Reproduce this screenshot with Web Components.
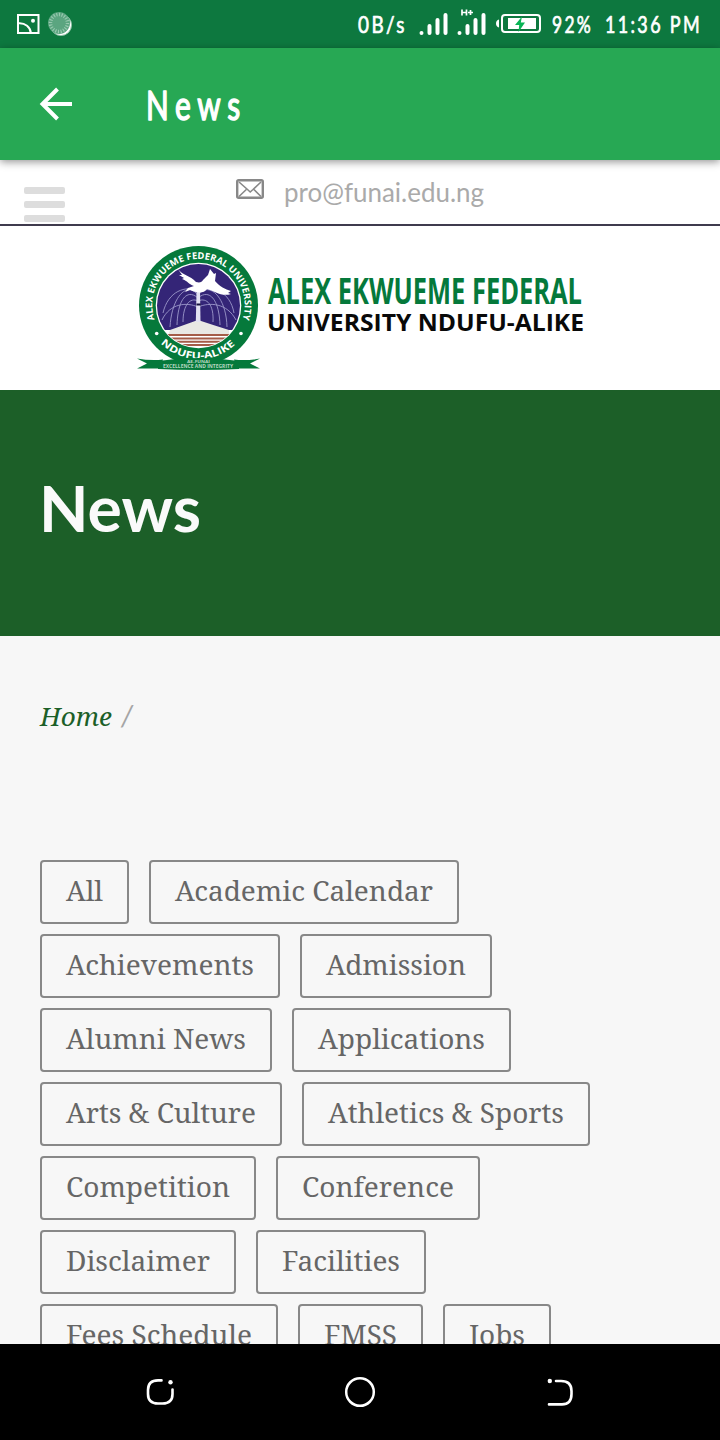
<!DOCTYPE html>
<html lang="en">
<head>
<meta charset="utf-8">
<title>News</title>
<style>
html,body{margin:0;padding:0;background:#f7f7f7}
body{width:720px;height:1440px;overflow:hidden}
</style>
</head>
<body>
<news-screen></news-screen>
<script>
const define = (name, html) => customElements.define(name, class extends HTMLElement {
  constructor(){ super(); this.attachShadow({mode:'open'}).innerHTML = html; }
});

/* One line of text set to an exact measure: w, h, base (baseline), size, face */
customElements.define('fit-text', class extends HTMLElement {
  connectedCallback(){
    const a = (n, d) => this.getAttribute(n) ?? d;
    const faces = {
      serif: '"Noto Serif","DejaVu Serif",serif',
      lato: 'Lato,sans-serif',
      sans: '"Open Sans","Noto Sans",sans-serif'
    };
    const root = this.attachShadow({mode:'open'});
    root.innerHTML = `<style>:host{display:block;flex:none}svg{display:block;overflow:visible}
      text{font-family:${faces[a('face','lato')]};font-size:${a('size',28)}px;font-weight:${a('weight',400)};font-style:${a('slant','normal')};letter-spacing:${a('track',0)}px;fill:currentColor;stroke:currentColor;stroke-width:${a('stroke',0)};stroke-linejoin:round}</style>
      <svg width="${a('w')}" height="${a('h')}"><text x="0" y="${a('base')}" textLength="${a('w')}" lengthAdjust="spacingAndGlyphs"></text></svg>`;
    root.querySelector('text').textContent = a('text','');
  }
});

define('status-bar', `<style>
:host{display:flex;height:48px;background:#0d783f;color:#fff;padding:0 18px 0 16px;box-sizing:border-box}
svg{display:block;flex:none}.sp{flex:1}
.n{display:flex}
</style>
<svg width="58" height="48" fill="none" stroke="#fff">
 <rect x="2" y="15" width="20.5" height="18" stroke-width="2"/>
 <path d="M3 23.3C9 23 14.5 27 14.8 33" stroke-width="2"/><circle cx="17" cy="20.8" r="2" fill="#fff" stroke="none"/>
 <circle cx="45" cy="25" r="10.6" fill="#fff" stroke="#8fc1a6" stroke-width="1"/>
 <circle cx="43" cy="23" r="11" fill="#5ba580" stroke="none"/>
 <circle cx="43" cy="23" r="8.5" stroke="#9bcab1" stroke-width="3.5" stroke-dasharray="1.1 1.55"/>
</svg>
<span class="sp"></span>
<fit-text text="0B/s" w="49" h="48" base="33" size="23" track="3" stroke=".7"></fit-text>
<svg width="144" height="48" style="margin-left:1px">
 <g stroke="#fff" stroke-width="4" stroke-linecap="round">
 <path d="M13.5 33V33M21.5 26V33M29.5 20V33M37.5 15V33M51.5 33V33M59.5 26V33M67.5 20V33M75.5 15V33"/></g>
 <path d="M54 9.5V15.5M58.5 9.5V15.5M54 12.5H58.5M60 12.5H65M62.5 10V15" stroke="#fff" stroke-width="1.7" fill="none"/>
 <rect x="94" y="15" width="38" height="17" rx="3" fill="none" stroke="#fff" stroke-width="2"/>
 <path d="M91 19.5V27.5C87 27 87 20 91 19.5Z" fill="#fff"/><rect x="100" y="18" width="28" height="11" fill="#fff"/>
 <path d="M114 16.5L107 25H111.2L110.5 32L117 22.5H112.8Z" fill="#08b454"/>
</svg>
<fit-text text="92%" w="41" h="48" base="33" size="23" track="3" stroke=".7"></fit-text>
<fit-text text="11:36 PM" w="97" h="48" base="33" size="23" track="3" stroke=".7" style="margin-left:12px"></fit-text>`);

define('app-bar', `<style>
:host{display:flex;height:112px;background:#27a854;color:#fff;box-shadow:0 2px 8px rgba(0,0,0,.42);position:relative;z-index:1}
</style>
<svg width="146" height="112" fill="none" stroke="#fff" stroke-width="4"><path d="M72 56H43M57.5 41L42.5 56L57.5 71"/></svg>
<fit-text text="News" w="101" h="112" base="72" size="40" track="9" stroke="1.5"></fit-text>`);

define('contact-bar', `<style>
:host{display:flex;box-sizing:border-box;height:66px;border-bottom:2px solid #3f3b4d;background:#fff;color:#aaa}
.menu{display:flex;flex-direction:column;gap:7px;margin:27px 0 0 24px;width:41px}
.menu i{height:7px;border-radius:2px;background:#ddd;display:block}
.mail{margin:18px 0 0 171px}
</style>
<div class="menu"><i></i><i></i><i></i></div>
<svg class="mail" width="28" height="22" fill="none" stroke="#888"><rect x="1.2" y="2.2" width="25.6" height="17.6" rx="1.5" stroke-width="2.4"/><path d="M3 4L11.5 11.5L14.2 14L17 11.5L25 4M3 18.5L10.3 11.5M25 18.5L18 11.5" stroke-width="1.6"/></svg>
<fit-text text="pro@funai.edu.ng" w="200" h="64" base="41.5" size="27.5" style="margin-left:20px"></fit-text>`);

define('university-crest', `<style>:host{display:block;flex:none}svg{display:block}text{font-family:"Open Sans",sans-serif;font-weight:700;fill:#fff}</style>
<svg width="124" height="128" viewBox="136 244 124 128">
 <defs><path id="top" d="M154.6 319.6A46.2 46.2 0 1 1 242.3 319.6"/><path id="low" d="M160.8 343.5A53.5 53.5 0 0 0 236.2 343.5"/>
 <clipPath id="disc"><circle cx="198.5" cy="305.5" r="42"/></clipPath></defs>
 <circle cx="198.5" cy="305.5" r="59.5" fill="#05793b"/>
 <circle cx="198.5" cy="305.5" r="42.8" fill="#fff"/><circle cx="198.5" cy="305.5" r="41.5" fill="#342577"/>
 <g clip-path="url(#disc)">
  <g fill="none" stroke="#a3a0d0" stroke-width="1" opacity=".85">
   <path d="M198 296C190 281 172 293 170 327M198 296C206 281 226 293 227 327M198 298C188 289 178 297 177 325M198 298C208 289 219 297 220 325M198 301C190 297 183 305 183 322M198 301C207 297 214 305 213 322M198 291C186 285 168 291 163 313M198 291C212 285 230 291 234 313M198 307C187 302 170 303 162 320M198 307C210 302 227 303 236 320"/>
  </g>
  <rect x="155" y="330" width="87" height="20" fill="#fff"/>
  <path d="M170 330Q184 325 198 320Q213 325 229 330V336H168Z" fill="#e9e8e4"/>
  <path d="M163 335H234M165 338.4H232M170 341.8H227M177 345H220" stroke="#a55c48" stroke-width="2"/>
  <path d="M196.6 289H200L200.5 322H195.8Z" fill="#e3e2f2"/><path d="M196.5 304.5H200.7" stroke="#17133d" stroke-width="2"/>
 </g>
 <path d="M178 269C183 276 190 275 196 282C200 283 202 282 203 280L208 275L210 269L214 274L216 273L215 281C220 287 225 289 231 291L228 293L231 294C222 297 214 291 207 289C204 294 196 293 190 290L185 292L188 288L194 286C188 284 188 281 182 279L184 278L179 275L182 275Z" fill="#fff"/>
 <text font-size="9.3"><textPath href="#top" textLength="174" lengthAdjust="spacingAndGlyphs">ALEX EKWUEME FEDERAL UNIVERSITY</textPath></text>
 <text font-size="9.8"><textPath href="#low" textLength="82" lengthAdjust="spacingAndGlyphs">NDUFU-ALIKE</textPath></text>
 <circle cx="156.7" cy="333.5" r="1.8" fill="#fff"/><circle cx="241" cy="333.5" r="1.8" fill="#fff"/>
 <path d="M137 358.5Q151 361 163 359.5L160 368.5H137L147 363.5ZM260 358.5Q246 361 234 359.5L237 368.5H260L250 363.5Z" fill="#05793b"/>
 <path d="M158 361Q198 355 239 361V369Q198 371 158 369Z" fill="#05793b"/>
 <text x="187" y="363" font-size="4.2" textLength="23" lengthAdjust="spacingAndGlyphs" style="fill:#b5d6c1">AE-FUNAI</text>
 <text x="163" y="368" font-size="4.4" textLength="70" lengthAdjust="spacingAndGlyphs" style="fill:#b5d6c1">EXCELLENCE AND INTEGRITY</text>
</svg>`);

define('brand-banner', `<style>
:host{display:flex;height:164px;background:#fff;padding-left:136px;box-sizing:border-box}
university-crest{margin-top:18px}
.names{display:flex;flex-direction:column;margin-left:8px}
.a{color:#05793b}.b{color:#090909;margin-left:-1px}
</style><university-crest></university-crest>
<div class="names"><fit-text class="a" face="sans" weight="700" text="ALEX EKWUEME FEDERAL" w="314" h="82" base="78" size="35"></fit-text>
<fit-text class="b" face="sans" weight="700" text="UNIVERSITY NDUFU-ALIKE" w="317" h="30" base="22.5" size="22.5"></fit-text></div>`);

define('page-hero', `<style>:host{display:block;box-sizing:border-box;height:246px;background:#1c5f28;color:#fafafa;padding:72px 0 0 39px}</style>
<fit-text text="News" weight="700" w="162" h="90" base="70" size="64"></fit-text>`);

define('bread-crumb', `<style>:host{display:flex;height:50px;padding:60px 0 0 40px;color:#1c5f28}.s{color:#a5a5a5;margin-left:9px}</style>
<fit-text face="serif" slant="italic" text="Home" w="72" h="50" base="30" size="25"></fit-text>
<fit-text class="s" face="lato" slant="italic" text="/" w="12" h="50" base="30" size="28"></fit-text>`);

customElements.define('filter-chip', class extends HTMLElement {
  connectedCallback(){
    this.attachShadow({mode:'open'}).innerHTML = `<style>:host{display:block;box-sizing:border-box;height:64px;padding:0 24px;border:2px solid #888;border-radius:4px;color:#666}</style>
    <fit-text face="serif" text="${this.getAttribute('label').replace('&','&amp;')}" w="${this.getAttribute('w')}" h="60" base="39" size="27.4"></fit-text>`;
  }
});

define('filter-list', `<style>:host{display:flex;flex-wrap:wrap;gap:10px 20px;width:640px;padding:114px 0 0 40px}</style>
${[['All',37],['Academic Calendar',258],['Achievements',188],['Admission',140],['Alumni News',180],['Applications',167],['Arts & Culture',190],['Athletics & Sports',236],['Competition',164],['Conference',152],['Disclaimer',144],['Facilities',118],['Fees Schedule',186],['FMSS',73],['Jobs',56]]
 .map(([t,w]) => `<filter-chip label="${t.replace('&','&amp;')}" w="${w}"></filter-chip>`).join('')}`);

define('nav-bar', `<style>:host{display:flex;height:96px;background:#000;justify-content:space-between;align-items:center;padding:0 144px;box-sizing:border-box}svg{display:block}</style>
<svg width="32" height="32" fill="none" stroke="#fff" stroke-width="2.6" stroke-linecap="round"><path d="M17.5 4.4H14Q4 4.4 4 14V18Q4 27.5 14 27.5H18.5Q28.5 27.5 28.5 18V13.5"/><circle cx="26.5" cy="6.3" r="2.2" fill="#fff" stroke="none"/></svg>
<svg width="32" height="32" fill="none" stroke="#fff" stroke-width="2.5"><circle cx="16" cy="16" r="13.8"/></svg>
<svg width="32" height="32" fill="none" stroke="#fff" stroke-width="2.6" stroke-linecap="round"><path d="M12 5H17Q27.5 5 27.5 15V18Q27.5 28.4 18 28.4H5"/><circle cx="5.8" cy="5" r="2.2" fill="#fff" stroke="none"/></svg>`);

define('news-screen', `<style>
:host{display:flex;flex-direction:column;width:720px;height:1440px;overflow:hidden;background:#f7f7f7}
main{flex:1;min-height:0;overflow:hidden;display:flex;flex-direction:column}
main>*,status-bar,app-bar,nav-bar{flex:none}
</style>
<status-bar></status-bar><app-bar></app-bar>
<main><contact-bar></contact-bar><brand-banner></brand-banner><page-hero></page-hero><bread-crumb></bread-crumb><filter-list></filter-list></main>
<nav-bar></nav-bar>`);
</script>
</body>
</html>
